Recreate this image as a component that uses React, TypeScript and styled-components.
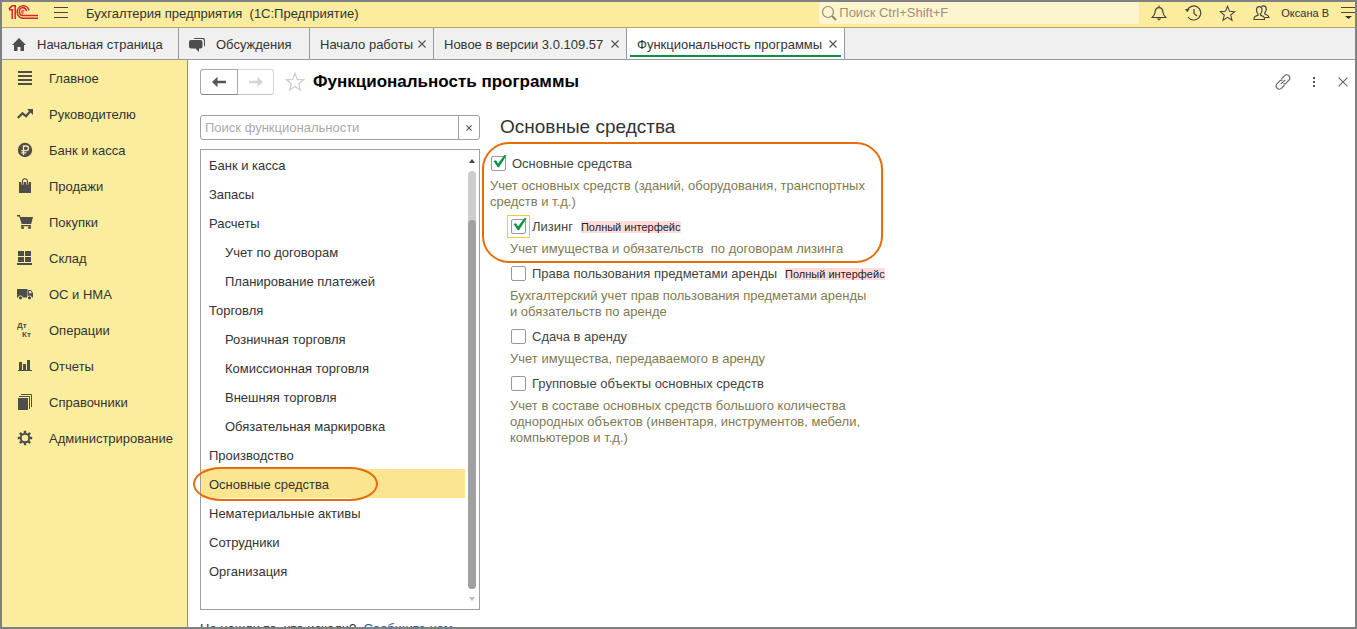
import React from "react";
import styled, { createGlobalStyle, css } from "styled-components";

const GlobalStyle = createGlobalStyle`
  *, *::before, *::after { box-sizing: border-box; }
  body { margin: 0; background: #fff; }
  body, button, input {
    font-family: "Liberation Sans", Arial, sans-serif;
    font-size: 13px;
    line-height: 16px;
    color: #333;
  }
  button { margin: 0; padding: 0; border: 0; background: none; cursor: pointer; }
`;

const Window = styled.div`
  display: flex;
  flex-direction: column;
  height: 100vh;
  border: 2px solid #808080;
  background: #fff;
  overflow: hidden;
`;

const TopBar = styled.header`
  display: flex;
  flex: none;
  align-items: flex-start;
  height: 26px;
  padding-left: 6px;
  background: #fbec9e;
  border-bottom: 1px solid #b3a767;
`;

const IconButton = styled.button<{ $w?: number }>`
  display: flex;
  align-items: center;
  justify-content: center;
  flex: none;
  width: ${(p) => p.$w ?? 34}px;
  height: 22px;
`;

const LogoBox = styled.div`
  flex: none;
  height: 17px;
  padding-top: 2px;
`;

const AppTitle = styled.div`
  flex: 1;
  padding: 4px 0 0 2px;
  white-space: pre;
`;

const GlobalSearch = styled.label`
  display: flex;
  align-items: center;
  flex: none;
  width: 320px;
  height: 22px;
  margin-right: 3px;
  background: #fdf5cf;
  border-radius: 2px;
  input {
    flex: 1;
    padding: 0;
    border: 0;
    outline: 0;
    background: none;
  }
  input::placeholder { color: #99927a; opacity: 1; }
`;

const UserName = styled.button`
  flex: none;
  height: 22px;
  margin: 0 12px 0 3px;
  font-size: 11px;
  white-space: nowrap;
`;

const TabStrip = styled.nav`
  display: flex;
  flex: none;
  height: 32px;
  background: #f0f0f0;
  border-bottom: 1px solid #999;
`;

const Tab = styled.div<{ $active?: boolean; $w: number }>`
  display: flex;
  flex: none;
  align-items: center;
  justify-content: space-between;
  width: ${(p) => p.$w}px;
  padding: 0 3px 0 10px;
  border-right: 1px solid #999;
  background: ${(p) => (p.$active ? "#fff" : "#f0f0f0")};
  position: relative;
  white-space: nowrap;
  ${(p) =>
    p.$active &&
    css`
      &::after {
        content: "";
        position: absolute;
        left: 3px;
        right: 3px;
        bottom: 2px;
        height: 2px;
        background: #0b8f47;
      }
    `}
`;

const TabLabel = styled.button`
  display: flex;
  align-items: center;
  gap: 11px;
  padding-top: 2px;
  white-space: nowrap;
`;

const Body = styled.div`
  display: flex;
  flex: 1;
  min-height: 0;
`;

const Sidebar = styled.nav`
  flex: none;
  width: 186px;
  background: #fbed9e;
  border-right: 1px solid #999166;
`;

const SideLink = styled.a`
  display: flex;
  align-items: center;
  gap: 16px;
  height: 36px;
  padding-left: 15px;
  color: #333;
  text-decoration: none;
  svg { flex: none; }
  span { padding-top: 2px; }
`;

const Page = styled.main`
  flex: 1;
  min-width: 0;
  padding: 8px 0 0 12px;
`;

const PageHeader = styled.div`
  display: flex;
  align-items: center;
  height: 28px;
`;

const NavButtons = styled.div`
  display: flex;
  height: 26px;
  margin-right: 11px;
`;

const NavButton = styled.button<{ $dim?: boolean }>`
  display: flex;
  align-items: center;
  justify-content: center;
  width: ${(p) => (p.$dim ? 36 : 38)}px;
  border: 1px solid ${(p) => (p.$dim ? "#d4d4d4" : "#a8a8a8")};
  border-bottom-color: ${(p) => (p.$dim ? "#c4c4c4" : "#888")};
  border-left-width: ${(p) => (p.$dim ? 0 : 1)}px;
  border-radius: ${(p) => (p.$dim ? "0 3px 3px 0" : "3px 0 0 3px")};
`;

const PageTitle = styled.h1`
  flex: 1;
  margin: 0 0 0 8px;
  font-size: 17px;
  line-height: 24px;
  font-weight: 700;
  color: #000;
`;

const Columns = styled.div`
  display: flex;
  gap: 10px;
  padding-top: 19px;
`;

const Finder = styled.section`
  flex: none;
  width: 280px;
`;

const SearchBox = styled.div`
  display: flex;
  height: 25px;
  border: 1px solid #a0a0a0;
  border-radius: 3px;
  input {
    flex: 1;
    min-width: 0;
    padding: 1px 4px 0;
    border: 0;
    outline: 0;
    background: none;
  }
  input::placeholder { color: #aaa; opacity: 1; }
`;

const ClearButton = styled.button`
  display: flex;
  align-items: center;
  justify-content: center;
  width: 21px;
  border-left: 1px solid #a0a0a0;
`;

const ListFrame = styled.div`
  display: flex;
  margin: 9px 0 11px;
  height: 461px;
  border: 1px solid #a0a0a0;
`;

const List = styled.ul`
  flex: 1;
  margin: 0;
  padding: 0;
  list-style: none;
`;

const ringStyle = css`
  content: "";
  position: absolute;
  border: 2px solid #e56d0a;
  pointer-events: none;
`;

const ListItem = styled.li<{ $nested?: boolean; $selected?: boolean }>`
  position: relative;
  height: 29px;
  padding-left: ${(p) => (p.$nested ? 24 : 8)}px;
  line-height: 32px;
  background: ${(p) => (p.$selected ? "#fce591" : "transparent")};
  ${(p) =>
    p.$selected &&
    css`
      &::after {
        ${ringStyle}
        left: -8px;
        top: -2px;
        width: 185px;
        height: 34px;
        border-radius: 28px / 17px;
      }
    `}
`;

const ScrollBar = styled.div`
  display: flex;
  flex-direction: column;
  align-items: center;
  flex: none;
  width: 14px;
  padding: 9px 0 8px;
  gap: 8px;
`;

const Track = styled.div`
  flex: 1;
  width: 8px;
  padding-top: 49px;
  border-radius: 4px;
  background: #cdcdcd;
`;

const Thumb = styled.div`
  height: 100%;
  border-radius: 4px;
  background: #a0a0a0;
`;

const Hint = styled.p`
  margin: 0;
  white-space: pre;
  a { color: #1a52b5; }
`;

const Details = styled.section`
  flex: none;
  width: 386px;
`;

const SectionTitle = styled.h2`
  margin: 0 0 15px 10px;
  font-size: 19px;
  line-height: 23px;
  font-weight: 400;
`;

const Highlighted = styled.div`
  position: relative;
  &::after {
    ${ringStyle}
    inset: -11px -7px -6px -8px;
    border-radius: 27px;
  }
`;

const Option = styled.div<{ $nested?: boolean }>`
  margin-bottom: 6px;
  padding-left: ${(p) => (p.$nested ? 20 : 0)}px;
`;

const OptionLabel = styled.label`
  display: flex;
  align-items: center;
  height: 20px;
  white-space: nowrap;
  color: #444;
`;

const OptionText = styled.span`
  padding-top: 2px;
`;

const CheckWrap = styled.span`
  position: relative;
  display: flex;
  margin: 0 6px 0 1px;
  svg {
    position: absolute;
    left: 0;
    top: -2px;
    pointer-events: none;
  }
`;

const CheckBox = styled.input`
  appearance: none;
  width: 15px;
  height: 15px;
  margin: 0;
  border: 1px solid #999;
  border-radius: 2px;
  background: #fff;
`;

const FocusFrame = styled.span`
  position: absolute;
  inset: -4px;
  border: 1px solid #f5c92f;
  pointer-events: none;
`;

const Badge = styled.span`
  margin-left: 8px;
  background: #ffdcdc;
  font-size: 11px;
  line-height: 14px;
  color: #222;
`;

const Description = styled.p`
  margin: 5px 0 0;
  white-space: pre-wrap;
  color: #7f7a50;
`;

const Logo = () => (
  <svg width="30" height="16" viewBox="0 0 30 16" fill="none" stroke="#d8232a" strokeWidth="1.5">
    <path d="M.8 4.800 4 2.200M1 5.800H4.200V15" />
    <path d="M3.500 1.800H7.200V15" />
    <path d="M21 6.500A6 6.200 0 1 0 15 14.200H30" />
    <path d="M18.500 7A3.600 3.800 0 1 0 15 11.400H30" />
    <path d="M16.200 7.300a1.300 1.300 0 1 0-.6 1.800" strokeWidth="1.100" />
  </svg>
);

const Cross = ({ size = 8, color = "#555", w = 1.2 }) => (
  <svg width={size} height={size} viewBox="0 0 8 8" stroke={color} strokeWidth={w}>
    <path d="M.5.5l7 7M7.5.5l-7 7" />
  </svg>
);

const Star = ({ size, color }: { size: number; color: string }) => (
  <svg width={size} height={size} viewBox="0 0 18 18" fill="none" stroke={color} strokeWidth="1.1">
    <path d="M9 1.3l2.1 5.3 5.7.4-4.4 3.6 1.4 5.6L9 13.1l-4.8 3.1 1.4-5.6L1.2 7l5.7-.4z" />
  </svg>
);

const Arrow = ({ color, flip }: { color: string; flip?: boolean }) => (
  <svg width="14" height="12" viewBox="0 0 14 12" fill={color}>
    <path d={flip ? "M14 6 8.5.8v4H0v2.4h8.5v4z" : "M0 6 5.5.8v4H14v2.4H5.5v4z"} />
  </svg>
);

const SideIcon = ({ children }: { children: React.ReactNode }) => (
  <svg width="16" height="16" viewBox="0 0 16 16" fill="#4d4d4d">
    {children}
  </svg>
);

const sections = [
  { name: "Главное", icon: <path d="M1 1h14v2H1zM1 5h14v2H1zM1 9h14v2H1zM1 13h14v2H1z" /> },
  {
    name: "Руководителю",
    icon: (
      <>
        <path d="M.8 12 5.500 7.300l3.600 3 4.500-5.600" fill="none" stroke="#4d4d4d" strokeWidth="2.2" />
        <path d="M10 3h6v6z" />
      </>
    ),
  },
  {
    name: "Банк и касса",
    icon: (
      <>
        <circle cx="8" cy="8" r="7.2" />
        <path d="M6.5 13V4h2.7a2.3 2.3 0 0 1 0 4.7H4.3M4.3 10.8h5" fill="none" stroke="#fbed9e" strokeWidth="1.3" />
      </>
    ),
  },
  {
    name: "Продажи",
    icon: (
      <>
        <path d="M2 4h12v11H2z" />
        <path d="M5.5 6.5V3.2a2.5 2.5 0 0 1 5 0v3.3" fill="none" stroke="#fbed9e" strokeWidth="2.4" />
        <path d="M5.5 6.5V3.2a2.5 2.5 0 0 1 5 0v3.3" fill="none" stroke="#4d4d4d" strokeWidth="1.1" />
      </>
    ),
  },
  {
    name: "Покупки",
    icon: (
      <>
        <path d="M0 1h3l.5 2H16l-1.8 7H4.7L2.3 2.4H0zM4 11h10v1.2H4z" />
        <circle cx="5.5" cy="13.6" r="1.5" />
        <circle cx="12.5" cy="13.6" r="1.5" />
      </>
    ),
  },
  { name: "Склад", icon: <path d="M1 1h6v5H1zM8 1h6v5H8zM1 7h6v5H1zM8 7h6v5H8zM0 13h15v2H0z" /> },
  {
    name: "ОС и НМА",
    icon: (
      <>
        <path d="M0 3h10.5v8.5H0z" />
        <path d="M11 4h3l2 3v4.5h-5z" />
        <path d="M12 5h1.6l1.3 2.2H12z" fill="#fbed9e" />
        <circle cx="3.5" cy="11.8" r="2.4" fill="#fbed9e" />
        <circle cx="12.5" cy="11.8" r="2.4" fill="#fbed9e" />
        <circle cx="3.5" cy="11.8" r="1.6" />
        <circle cx="12.5" cy="11.8" r="1.6" />
      </>
    ),
  },
  {
    name: "Операции",
    icon: (
      <g fontFamily="Liberation Sans, sans-serif" fontSize="8" fontWeight="700">
        <text x="0" y="6">Дт</text>
        <text x="5" y="15">Кт</text>
      </g>
    ),
  },
  { name: "Отчеты", icon: <path d="M2 4h3v8H2zM6 6h3v6H6zM10 2h3v10h-3zM1 12h14v1H1z" /> },
  {
    name: "Справочники",
    icon: (
      <>
        <path d="M1 4h10v12H1z" />
        <path d="M2 2.5h10.500V15M4 .5h10.500V13" fill="none" stroke="#4d4d4d" />
      </>
    ),
  },
  {
    name: "Администрирование",
    icon: (
      <g fill="none" stroke="#4d4d4d">
        <circle cx="8" cy="8" r="4.2" strokeWidth="1.9" />
        <path
          d="M8 .8v2.700M8 12.500v2.700M.8 8h2.700M12.500 8h2.700M2.900 2.900l1.900 1.900M11.200 11.200l1.900 1.900M2.900 13.100l1.900-1.900M11.200 4.800l1.900-1.900"
          strokeWidth="2.400"
        />
      </g>
    ),
  },
];

const features: { name: string; nested?: boolean; selected?: boolean }[] = [
  { name: "Банк и касса" },
  { name: "Запасы" },
  { name: "Расчеты" },
  { name: "Учет по договорам", nested: true },
  { name: "Планирование платежей", nested: true },
  { name: "Торговля" },
  { name: "Розничная торговля", nested: true },
  { name: "Комиссионная торговля", nested: true },
  { name: "Внешняя торговля", nested: true },
  { name: "Обязательная маркировка", nested: true },
  { name: "Производство" },
  { name: "Основные средства", selected: true },
  { name: "Нематериальные активы" },
  { name: "Сотрудники" },
  { name: "Организация" },
];

type OptionProps = {
  label: string;
  text: string;
  nested?: boolean;
  checked?: boolean;
  focused?: boolean;
  full?: boolean;
};

const FeatureOption = ({ label, text, nested, checked, focused, full }: OptionProps) => {
  const [on, setOn] = React.useState(!!checked);
  return (
    <Option $nested={nested}>
      <OptionLabel>
        <CheckWrap>
          <CheckBox type="checkbox" checked={on} onChange={() => setOn(!on)} />
          {focused && <FocusFrame />}
          {on && (
            <svg width="16" height="16" viewBox="0 0 16 16" fill="#0b9447">
              <path d="M2.500 7 5 6.200l2 3.200L13.500 1l2 .6L8 13.200H6.800z" />
            </svg>
          )}
        </CheckWrap>
        <OptionText>
          {label}
          {full && <Badge>Полный интерфейс</Badge>}
        </OptionText>
      </OptionLabel>
      <Description>{text}</Description>
    </Option>
  );
};

export default function App() {
  return (
    <>
      <GlobalStyle />
      <Window>
        <TopBar>
          <LogoBox>
            <Logo />
          </LogoBox>
          <IconButton $w={46} aria-label="Меню">
            <svg width="14" height="12" viewBox="0 0 14 12" stroke="#444">
              <path d="M0 .5h14M0 5.500h14M0 10.500h14" />
            </svg>
          </IconButton>
          <AppTitle>{"Бухгалтерия предприятия  (1С:Предприятие)"}</AppTitle>
          <GlobalSearch>
            <svg width="20" height="18" viewBox="0 0 20 18" fill="none" stroke="#8f896f">
              <circle cx="9" cy="8" r="5.500" strokeWidth="1.200" />
              <path d="M13 12l4 4" strokeWidth="2" />
            </svg>
            <input type="text" aria-label="Поиск" placeholder="Поиск Ctrl+Shift+F" />
          </GlobalSearch>
          <IconButton aria-label="Уведомления">
            <svg width="16" height="16" viewBox="0 0 16 16" fill="none" stroke="#444" strokeWidth="1.200">
              <path d="M8 .5V2M1.200 12.500C4.300 10 3.700 8.500 4.300 5.500a3.800 3.800 0 0 1 7.400 0c.6 3 0 4.500 3.100 7z" />
              <path d="M5.500 13.500h5L8 15.500z" fill="#444" stroke="none" />
            </svg>
          </IconButton>
          <IconButton aria-label="История">
            <svg width="17" height="16" viewBox="0 0 17 16" fill="none" stroke="#444" strokeWidth="1.200">
              <path d="M2.200 5.500A7 7 0 1 1 3 12M9 4v4.500l3 2.500" />
              <path d="M0 4h4.500L2.300 7.300z" fill="#444" stroke="none" />
            </svg>
          </IconButton>
          <IconButton aria-label="Избранное">
            <Star size={17} color="#444" />
          </IconButton>
          <IconButton aria-label="Пользователь">
            <svg width="17" height="16" viewBox="0 0 17 16" fill="none" stroke="#444" strokeWidth="1.200">
              <path d="M1 14.500c0-3 1-3 4-4.200V9C4 8 3.500 6.500 3.500 5c0-2 1-3.300 2.800-3.300S9 3 9 5c0 1.500-.5 3-1.500 4v1.300c3 1.200 4 1.200 4 4.200z" />
              <path d="M8.500 1.500C9 1 9.700.8 10.500.8c1.800 0 2.800 1.300 2.800 3.200 0 1.500-.5 2.800-1.500 3.700V9c3 1.200 4 1.200 4.200 3.500h-4" />
            </svg>
          </IconButton>
          <UserName>Оксана В</UserName>
          <IconButton $w={14} aria-label="Настройки окна">
            <svg width="14" height="12" viewBox="0 0 14 12">
              <path d="M0 .5h14M0 5.500h14" stroke="#444" />
              <path d="M4 9h7l-3.500 3z" fill="#333" />
            </svg>
          </IconButton>
        </TopBar>

        <TabStrip>
          <Tab $w={177}>
            <TabLabel>
              <svg width="14" height="13" viewBox="0 0 14 13" fill="#4d4d4d">
                <path d="M7 0l7 7h-2v6H8.500V9h-3v4H2V7H0z" />
              </svg>
              Начальная страница
            </TabLabel>
          </Tab>
          <Tab $w={131}>
            <TabLabel>
              <svg width="16" height="14" viewBox="0 0 16 14" fill="#4d4d4d">
                <path d="M6 0h8a2 2 0 0 1 2 2v5a2 2 0 0 1-1 1.700V3a2 2 0 0 0-2-2H4.500A2 2 0 0 1 6 0z" />
                <path d="M2 2h9.500a2 2 0 0 1 2 2v4.500a2 2 0 0 1-2 2H10V14l-3.500-3.500H2a2 2 0 0 1-2-2V4a2 2 0 0 1 2-2z" />
              </svg>
              Обсуждения
            </TabLabel>
          </Tab>
          {[
            { name: "Начало работы", w: 124 },
            { name: "Новое в версии 3.0.109.57", w: 193 },
            { name: "Функциональность программы", w: 218, active: true },
          ].map((t) => (
            <Tab key={t.name} $w={t.w} $active={t.active}>
              <TabLabel>{t.name}</TabLabel>
              <IconButton $w={16} aria-label="Закрыть вкладку">
                <Cross />
              </IconButton>
            </Tab>
          ))}
        </TabStrip>

        <Body>
          <Sidebar>
            {sections.map((s) => (
              <SideLink href="#" key={s.name}>
                <SideIcon>{s.icon}</SideIcon>
                <span>{s.name}</span>
              </SideLink>
            ))}
          </Sidebar>

          <Page>
            <PageHeader>
              <NavButtons>
                <NavButton aria-label="Назад">
                  <Arrow color="#555" />
                </NavButton>
                <NavButton $dim aria-label="Вперед">
                  <Arrow color="#d5d5d5" flip />
                </NavButton>
              </NavButtons>
              <Star size={20} color="#ccc" />
              <PageTitle>Функциональность программы</PageTitle>
              <IconButton $w={30} aria-label="Ссылка">
                <svg width="16" height="16" viewBox="0 0 16 16" fill="none" stroke="#666" strokeWidth="1.200">
                  <path d="M6.500 4.700 9.400 1.900a3 3 0 0 1 4.600 4.300l-2.900 3a2.600 2.600 0 0 1-2.600.6M9.500 11.300l-2.900 2.800A3 3 0 0 1 2 9.800l2.900-3a2.600 2.600 0 0 1 2.600-.6M5.800 10.200l4.400-4.400" />
                </svg>
              </IconButton>
              <IconButton $w={32} aria-label="Еще">
                <svg width="4" height="12" viewBox="0 0 4 12" fill="#555">
                  <path d="M1 1h2v2H1zM1 5h2v2H1zM1 9h2v2H1z" />
                </svg>
              </IconButton>
              <IconButton $w={25} aria-label="Закрыть">
                <Cross size={10} color="#666" w={0.9} />
              </IconButton>
            </PageHeader>

            <Columns>
              <Finder>
                <SearchBox>
                  <input type="text" aria-label="Поиск функциональности" placeholder="Поиск функциональности" />
                  <ClearButton aria-label="Очистить">
                    <Cross size={6} w={1.5} />
                  </ClearButton>
                </SearchBox>
                <ListFrame>
                  <List>
                    {features.map((f) => (
                      <ListItem key={f.name} $nested={f.nested} $selected={f.selected}>
                        {f.name}
                      </ListItem>
                    ))}
                  </List>
                  <ScrollBar>
                    <svg width="6" height="4" viewBox="0 0 6 4" fill="#444">
                      <path d="M0 4l3-4 3 4z" />
                    </svg>
                    <Track>
                      <Thumb />
                    </Track>
                    <svg width="6" height="4" viewBox="0 0 6 4" fill="#bbb">
                      <path d="M0 0l3 4 3-4z" />
                    </svg>
                  </ScrollBar>
                </ListFrame>
                <Hint>
                  {"Не нашли то, что искали?  "}
                  <a href="#">Сообщите нам</a>
                </Hint>
              </Finder>

              <Details>
                <SectionTitle>Основные средства</SectionTitle>
                <Highlighted>
                  <FeatureOption
                    label="Основные средства"
                    text="Учет основных средств (зданий, оборудования, транспортных средств и т.д.)"
                    checked
                  />
                  <FeatureOption
                    label="Лизинг"
                    text="Учет имущества и обязательств  по договорам лизинга"
                    nested
                    checked
                    focused
                    full
                  />
                </Highlighted>
                <FeatureOption
                  label="Права пользования предметами аренды"
                  text="Бухгалтерский учет прав пользования предметами аренды и обязательств по аренде"
                  nested
                  full
                />
                <FeatureOption label="Сдача в аренду" text="Учет имущества, передаваемого в аренду" nested />
                <FeatureOption
                  label="Групповые объекты основных средств"
                  text="Учет в составе основных средств большого количества однородных объектов (инвентаря, инструментов, мебели, компьютеров и т.д.)"
                  nested
                />
              </Details>
            </Columns>
          </Page>
        </Body>
      </Window>
    </>
  );
}
